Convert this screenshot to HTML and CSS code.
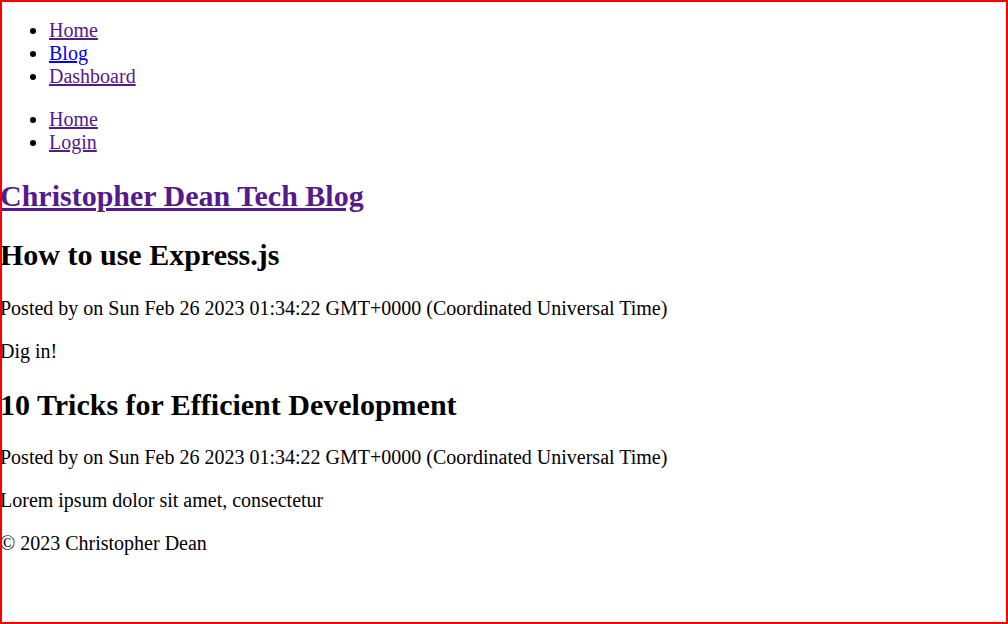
FILE: index.html
```html
<!DOCTYPE html>
<html lang="en">
<head>
<meta charset="utf-8">
<title>Christopher Dean Tech Blog</title>
<link rel="stylesheet" href="styles.css">
</head>
<body class="page">
<nav class="nav">
  <ul class="nav-list">
    <li><a class="link visited" href="#home">Home</a></li>
    <li><a class="link fresh" href="#blog">Blog</a></li>
    <li><a class="link visited" href="#dashboard">Dashboard</a></li>
  </ul>
</nav>
<nav class="nav">
  <ul class="nav-list">
    <li><a class="link visited" href="#home2">Home</a></li>
    <li><a class="link visited" href="#login">Login</a></li>
  </ul>
</nav>
<header class="site-header">
  <h2 class="site-title"><a class="link visited" href="#top">Christopher Dean Tech Blog</a></h2>
</header>
<main class="posts">
  <article class="post">
    <h2 class="post-title">How to use Express.js</h2>
    <p class="post-meta">Posted by on Sun Feb 26 2023 01:34:22 GMT+0000 (Coordinated Universal Time)</p>
    <p class="post-body">Dig in!</p>
  </article>
  <article class="post">
    <h2 class="post-title">10 Tricks for Efficient Development</h2>
    <p class="post-meta">Posted by on Sun Feb 26 2023 01:34:22 GMT+0000 (Coordinated Universal Time)</p>
    <p class="post-body">Lorem ipsum dolor sit amet, consectetur</p>
  </article>
</main>
<footer class="site-footer">
  <p class="copyright">© 2023 Christopher Dean</p>
</footer>
<div class="frame"></div>
</body>
</html>
```

FILE: styles.css
```css
html {
  background: #ffffff;
}
.page {
  margin: 0;
  font-family: "Liberation Serif", "Times New Roman", serif;
  font-size: 20px;
  color: #000000;
  background: #ffffff;
  min-height: 624px;
}
.nav-list {
  margin: 19px 0 20px;
  padding-left: 49px;
}
.nav + .nav .nav-list {
  margin-top: 20px;
}
.link {
  text-decoration: underline;
}
.visited {
  color: #551a8b;
}
.fresh {
  color: #0000ee;
}
.site-title,
.post-title {
  font-size: 30px;
  font-weight: bold;
  margin: 24.9px 0;
}
.post-meta,
.post-body,
.copyright {
  margin: 20px 0;
}
.frame {
  position: fixed;
  inset: 0;
  border: 2px solid #ff0000;
  pointer-events: none;
}
```
